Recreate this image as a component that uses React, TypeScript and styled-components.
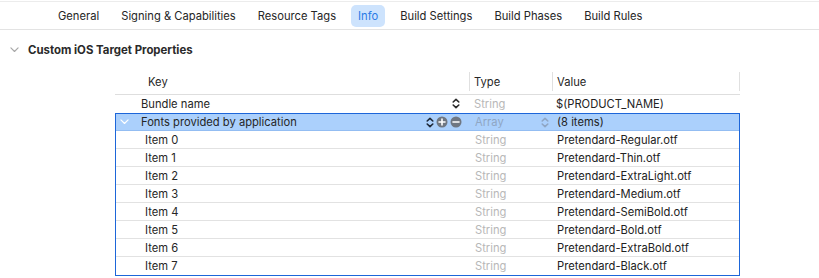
import React from 'react';
import styled, { createGlobalStyle } from 'styled-components';

const GlobalStyle = createGlobalStyle`
  html, body {
    margin: 0;
    padding: 0;
    background: #ffffff;
  }
  body {
    font-family: 'Inter', 'Liberation Sans', sans-serif;
    color: #262626;
    -webkit-font-smoothing: antialiased;
  }
`;

const Page = styled.div`
  width: 819px;
  height: 278px;
  overflow: hidden;
  background: #ffffff;
`;

const TabBar = styled.div`
  display: flex;
  align-items: center;
  gap: 8px;
  height: 27px;
  margin-top: 1px;
  padding-left: 51px;
  border-top: 1px solid #ececec;
  border-bottom: 1px solid #e3e3e3;
`;

const Tab = styled.div<{ $active?: boolean }>`
  padding: 4px 7px 4px;
  border-radius: 5px;
  font-size: 11.2px;
  color: ${p => (p.$active ? '#2a7ae6' : '#262626')};
  background: ${p => (p.$active ? '#cde3fd' : 'transparent')};
`;

const SectionHeader = styled.div`
  display: flex;
  align-items: center;
  gap: 9px;
  height: 40px;
  padding-left: 10px;
  font-size: 11.4px;
  font-weight: 700;
  color: #2a2a2a;
`;

const Table = styled.div`
  margin-left: 115px;
  width: 625px;
`;

const HeaderRow = styled.div`
  display: grid;
  grid-template-columns: 354px 83px 188px;
  height: 24px;
  align-items: stretch;
  border-bottom: 1px solid #dedede;
  font-size: 11.2px;
`;

const HeaderCell = styled.div<{ $divider?: boolean; $pad: number }>`
  display: flex;
  align-items: center;
  padding-left: ${p => p.$pad}px;
  margin: 2px 0 3px;
  border-left: ${p => (p.$divider ? '1px solid #e0e0e0' : 'none')};
`;

const LastHeaderCell = styled(HeaderCell)`
  border-right: 1px solid #e0e0e0;
`;

const Row = styled.div<{ $selected?: boolean; $plain?: boolean }>`
  display: grid;
  grid-template-columns: 354px 83px 188px;
  height: ${p => (p.$selected ? 17 : 18)}px;
  align-items: center;
  font-size: 11.2px;
  box-sizing: border-box;
  background: ${p => (p.$selected ? '#abd0fc' : 'transparent')};
  border-bottom: 1px solid ${p => (p.$plain ? 'transparent' : p.$selected ? '#93bdf2' : '#e2e2e2')};
  &:last-child {
    border-bottom: none;
  }
`;

const Group = styled.div`
  border: 1px solid #1d66d9;
`;

const KeyCell = styled.div<{ $indent: number }>`
  display: flex;
  align-items: center;
  padding-left: ${p => p.$indent}px;
  position: relative;
  height: 100%;
`;

const Disclosure = styled.span`
  position: absolute;
  left: 4px;
  top: 5px;
  display: flex;
`;

const KeyControls = styled.span<{ $right?: number }>`
  margin-left: auto;
  margin-right: ${p => p.$right ?? 8}px;
  display: flex;
  align-items: center;
  gap: 2px;
`;

const TypeCell = styled.div<{ $dim?: boolean }>`
  display: flex;
  align-items: center;
  justify-content: space-between;
  padding-left: 5px;
  padding-right: 4px;
  color: ${p => (p.$dim ? '#8fa6c4' : '#b8b8b8')};
`;

const ValueCell = styled.div`
  padding-left: 4px;
  color: #222222;
  white-space: nowrap;
`;

const Chevron: React.FC<{ color: string; size?: number }> = ({ color, size = 9 }) => (
  <svg width={size} height={size * 0.6} viewBox="0 0 10 6">
    <path d="M1 1 L5 5 L9 1" fill="none" stroke={color} strokeWidth="1.3" strokeLinecap="round" strokeLinejoin="round" />
  </svg>
);

const Stepper: React.FC<{ color: string }> = ({ color }) => (
  <svg width="8" height="11" viewBox="0 0 8 11">
    <path d="M1.2 4 L4 1.3 L6.8 4 M1.2 7 L4 9.7 L6.8 7" fill="none" stroke={color} strokeWidth="1.6" strokeLinecap="round" strokeLinejoin="round" />
  </svg>
);

const CircleButton: React.FC<{ plus?: boolean }> = ({ plus }) => (
  <svg width="12" height="12" viewBox="0 0 12 12">
    <circle cx="6" cy="6" r="5.5" fill="#6f7782" />
    <path d={plus ? 'M3 6 H9 M6 3 V9' : 'M3 6 H9'} stroke="#ffffff" strokeWidth="1.6" strokeLinecap="round" />
  </svg>
);

const tabs = ['General', 'Signing & Capabilities', 'Resource Tags', 'Info', 'Build Settings', 'Build Phases', 'Build Rules'];

const fonts = [
  'Pretendard-Regular.otf',
  'Pretendard-Thin.otf',
  'Pretendard-ExtraLight.otf',
  'Pretendard-Medium.otf',
  'Pretendard-SemiBold.otf',
  'Pretendard-Bold.otf',
  'Pretendard-ExtraBold.otf',
  'Pretendard-Black.otf',
];

export default function App() {
  return (
    <Page>
      <GlobalStyle />
      <TabBar>
        {tabs.map(t => (
          <Tab key={t} $active={t === 'Info'}>{t}</Tab>
        ))}
      </TabBar>
      <SectionHeader>
        <Chevron color="#a8a8a8" />
        Custom iOS Target Properties
      </SectionHeader>
      <Table>
        <HeaderRow>
          <HeaderCell $pad={33}>Key</HeaderCell>
          <HeaderCell $divider $pad={4}>Type</HeaderCell>
          <LastHeaderCell $divider $pad={4}>Value</LastHeaderCell>
        </HeaderRow>
        <Row $plain>
          <KeyCell $indent={26}>
            Bundle name
            <KeyControls $right={9}>
              <Stepper color="#2b2b2b" />
            </KeyControls>
          </KeyCell>
          <TypeCell>String</TypeCell>
          <ValueCell>$(PRODUCT_NAME)</ValueCell>
        </Row>
        <Group>
          <Row $selected>
            <KeyCell $indent={25}>
              <Disclosure><Chevron color="#ffffff" /></Disclosure>
              Fonts provided by application
              <KeyControls>
                <Stepper color="#1f2a3a" />
                <CircleButton plus />
                <CircleButton />
              </KeyControls>
            </KeyCell>
            <TypeCell $dim>
              Array
              <Stepper color="#8fa6c4" />
            </TypeCell>
            <ValueCell>(8 items)</ValueCell>
          </Row>
          {fonts.map((f, i) => (
            <Row key={f}>
              <KeyCell $indent={29}>Item {i}</KeyCell>
              <TypeCell>String</TypeCell>
              <ValueCell>{f}</ValueCell>
            </Row>
          ))}
        </Group>
      </Table>
    </Page>
  );
}
